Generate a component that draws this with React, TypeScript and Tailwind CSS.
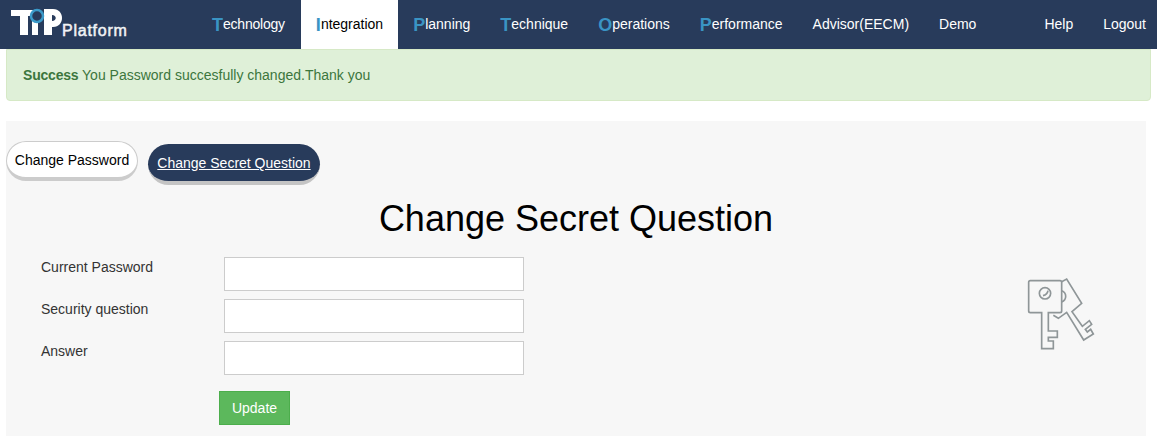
const NAV = [
  ["T", "echnology", "ml-[197px]", "tracking-[-0.22px]"],
  ["I", "ntegration", "ml-px bg-white text-black", ""],
  ["P", "lanning", "", ""],
  ["T", "echnique", "", ""],
  ["O", "perations", "", ""],
  ["P", "erformance", "", ""],
];

function KeysIcon() {
  return (
    <svg width="120" height="100" viewBox="0 0 360 300" fill="none" stroke="#8f9698" strokeWidth="5" className="mt-[3px] mr-[26px] shrink-0">
      <path d="M185 65 L200 57 L245 130 L216 155 L247 199 L268 182 L275 193 L256 208 L262 216 L272 208 L280 222 L251 240 L200 157 L175 175 L160 166" />
      <path d="M185 92 A18 18 0 0 1 185 126" />
      <path d="M91 62 H180 Q185 62 185 67 V153 Q185 158 180 158 H145 V213 H172 V232 H145 V243 H160 V266 H125 V158 H91 Q86 158 86 153 V67 Q86 62 91 62 Z" fill="#f7f7f7" />
      <circle cx="135" cy="100" r="17" />
      <path d="M129 107 Q142 104 144 92" />
    </svg>
  );
}

function Field({ label }: { label: string }) {
  return (
    <div className="flex h-[34px]">
      <label className="w-[183px] text-[14px] leading-5 text-[#333]">{label}</label>
      <input className="h-[34px] w-[300px] border border-[#ccc] bg-white" />
    </div>
  );
}

export default function App() {
  return (
    <div className="h-[436px] overflow-hidden bg-white font-['Liberation_Sans',Arial,sans-serif] text-[14px]">
      <header className="flex h-[49px] bg-[#283b5b] text-white">
        <div className="relative w-0">
          <svg width="60" height="36" viewBox="0 0 60 36" className="absolute left-[8px] top-[4px]">
            <path d="M3 6 H27 V12 H20 V31 H12 V12 H3 Z" fill="#fff" />
            <rect x="24" y="16" width="6" height="15" fill="#fff" />
            <path fillRule="evenodd" d="M36 5 H45 C57 5 57 23 45 23 H44 V31 H36 Z M44 11 V17 C49 17 49 11 44 11 Z" fill="#fff" />
            <circle cx="29" cy="12" r="6" fill="#283b5b" stroke="#3b9ac9" strokeWidth="2.5" />
          </svg>
          <span className="absolute left-[62px] top-[21px] text-[16px] leading-5 tracking-[0.75px] text-[#f0f2f5] [-webkit-text-stroke:0.5px_#f0f2f5]">Platform</span>
        </div>
        {NAV.map(([first, rest, extra, track]) => (
          <a key={first + rest} className={`flex h-[49px] items-center px-[15px] ${extra}`}>
            <span className="text-[18px] font-bold leading-5 text-[#3a94c4]">{first}</span>
            <span className={track}>{rest}</span>
          </a>
        ))}
        <a className="flex items-center px-[15px]">Advisor(EECM)</a>
        <a className="flex items-center px-[15px]">Demo</a>
        <a className="ml-auto flex items-center px-[15px]">Help</a>
        <a className="flex items-center pl-[15px] pr-[11px]">Logout</a>
      </header>
      <main className="px-[6px]">
        <div className="flex h-[52px] items-center rounded-b-[4px] border border-[#d6e9c6] bg-[#dff0d8] px-[16px] text-[#3c763d]">
          <p><strong className="tracking-[-0.2px]">Success</strong> You Password succesfully changed.Thank you</p>
        </div>
        <section className="mt-[20px] h-[315px] w-[1140px] bg-[#f7f7f7]">
          <div className="flex items-start gap-[10px] pt-[20px]">
            <a className="flex h-[40px] w-[132px] items-center justify-center rounded-full border border-[#ccc] border-b-[4px] bg-white pt-px text-black">Change Password</a>
            <a className="mt-[3px] flex h-[41px] w-[172px] items-center justify-center rounded-full border-b-[4px] border-[#c4c4c4] bg-[#283b5b] pt-[2px] text-white underline">Change Secret Question</a>
          </div>
          <h1 className="mt-[14px] text-center text-[36px] leading-[40px] text-black">Change Secret Question</h1>
          <div className="mt-[18px] flex justify-between">
            <form className="ml-[35px]">
              <div className="flex flex-col gap-[8px]">
                <Field label="Current Password" />
                <Field label="Security question" />
                <Field label="Answer" />
              </div>
              <button type="button" className="ml-[178px] mt-[16px] h-[34px] w-[71px] border border-[#4cae4c] bg-[#5cb85c] text-white">Update</button>
            </form>
            <KeysIcon />
          </div>
        </section>
      </main>
    </div>
  );
}
